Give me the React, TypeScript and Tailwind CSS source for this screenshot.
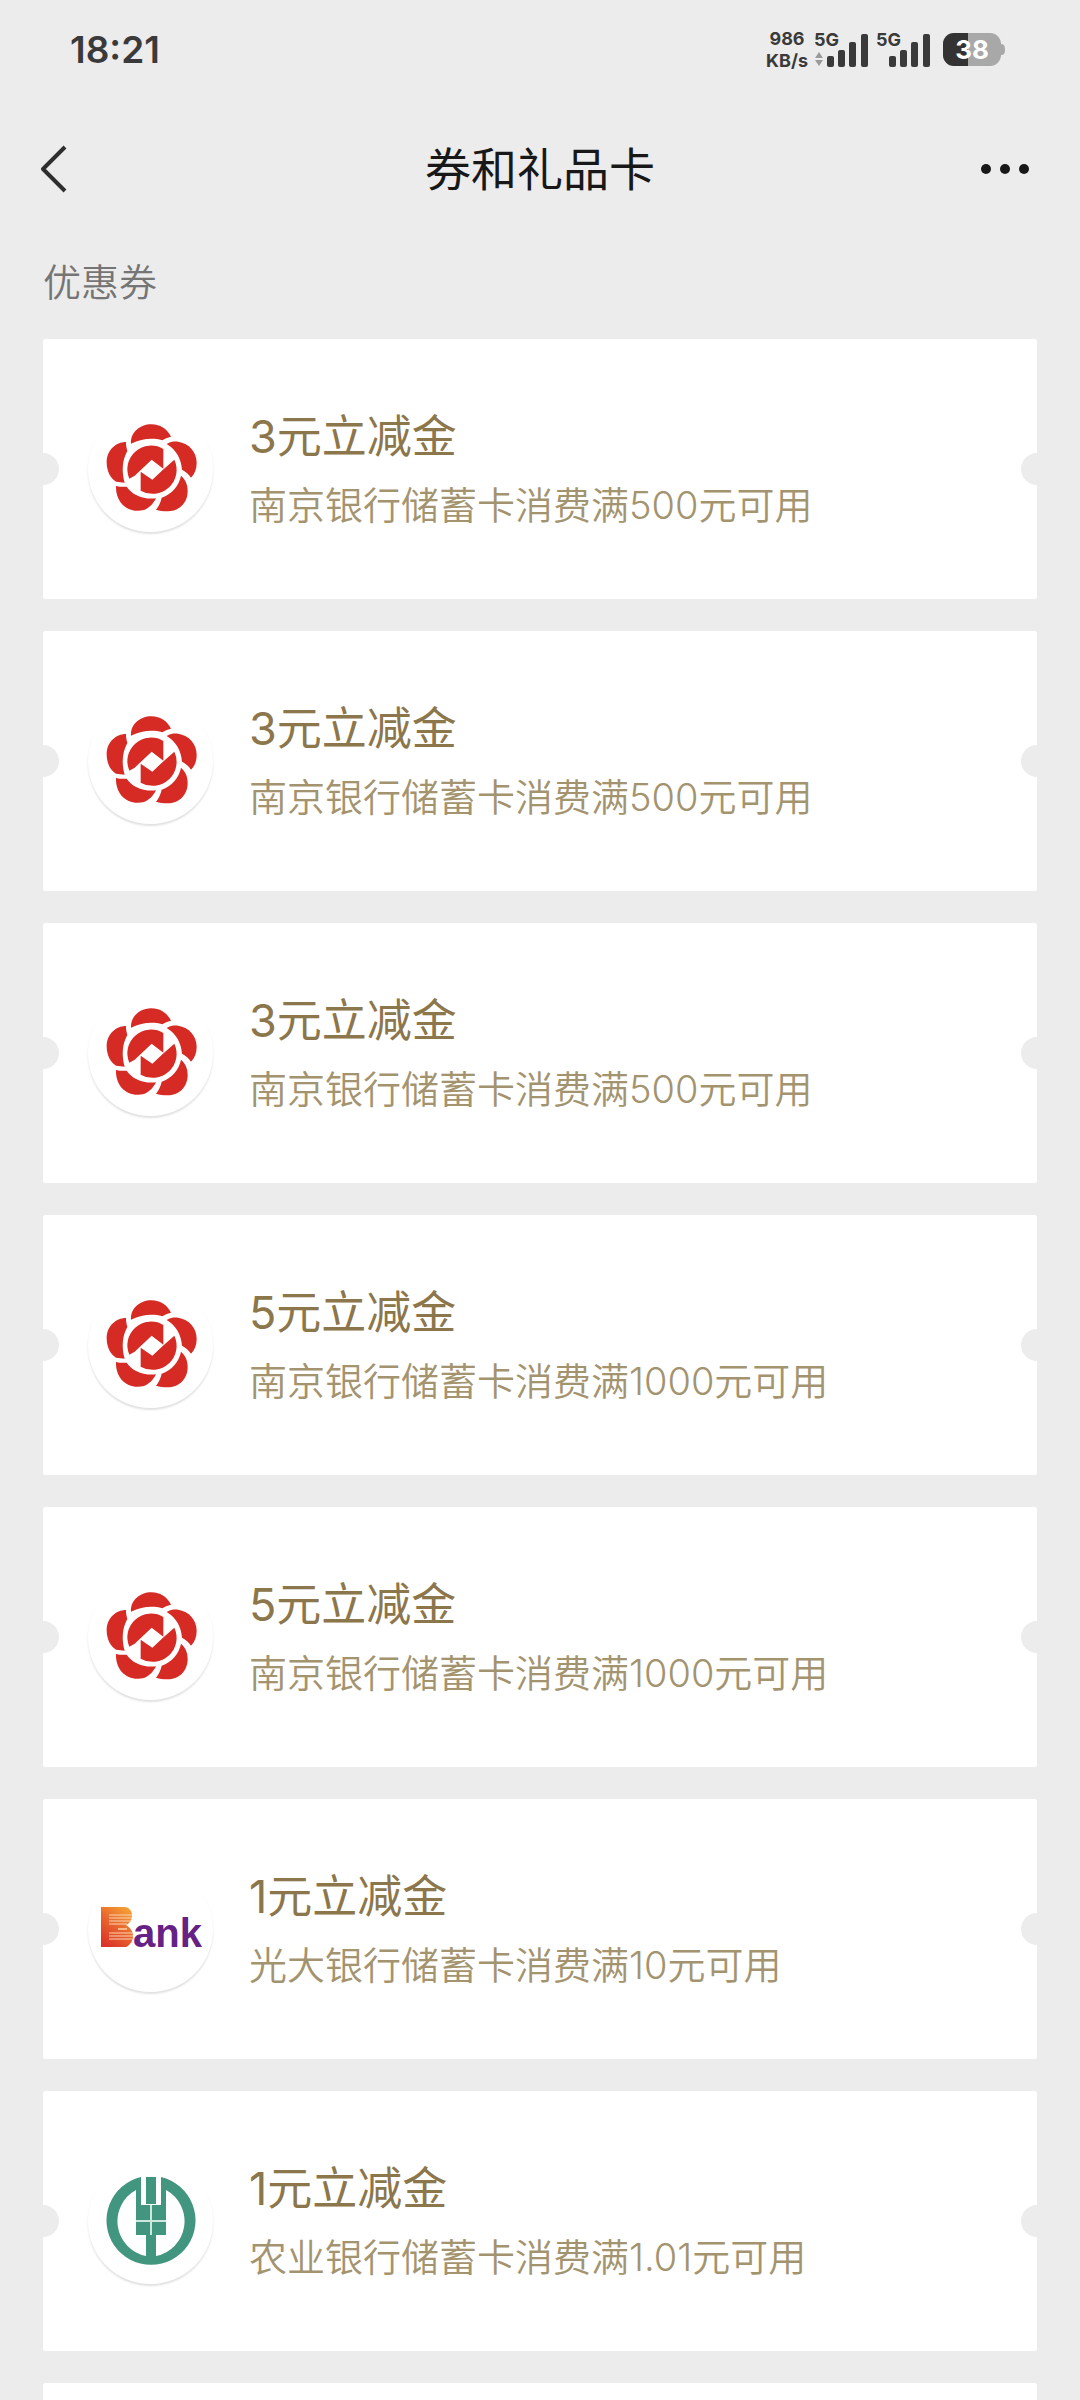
type Bank = 'nanjing' | 'everbright' | 'agricultural';

interface Coupon {
  id: number;
  bank: Bank;
  title: string;
  desc: string;
}

const coupons: Coupon[] = [
  { id: 1, bank: 'nanjing', title: '3元立减金', desc: '南京银行储蓄卡消费满500元可用' },
  { id: 2, bank: 'nanjing', title: '3元立减金', desc: '南京银行储蓄卡消费满500元可用' },
  { id: 3, bank: 'nanjing', title: '3元立减金', desc: '南京银行储蓄卡消费满500元可用' },
  { id: 4, bank: 'nanjing', title: '5元立减金', desc: '南京银行储蓄卡消费满1000元可用' },
  { id: 5, bank: 'nanjing', title: '5元立减金', desc: '南京银行储蓄卡消费满1000元可用' },
  { id: 6, bank: 'everbright', title: '1元立减金', desc: '光大银行储蓄卡消费满10元可用' },
  { id: 7, bank: 'agricultural', title: '1元立减金', desc: '农业银行储蓄卡消费满1.01元可用' },
];

function NanjingLogo() {
  return (
    <svg viewBox="264 232 375 375" className="w-full h-full" fill="#d62a25" aria-hidden="true">
      {/* petals */}
      <path d="M393 342C391 308 420 284 454 284C482 284 503 300 513 321C502 324 494 327 487 332C455 323 425 328 393 342Z" />
      <path d="M378 337C347 337 320 362 320 398C320 426 333 448 348 456L374 459C364 425 367 390 382 364C379 354 378 346 378 337Z" />
      <path d="M500 343C512 336 522 335 534 336C568 341 590 367 590 400C590 418 584 433 573 444C566 433 556 425 546 420C544 388 528 359 500 343Z" />
      <path d="M348 469C360 472 370 472 380 471C396 495 428 510 468 506C459 524 446 536 432 541C385 553 346 520 348 469Z" />
      <path d="M543 438C556 449 563 464 563 484C563 522 535 545 503 545C490 545 478 543 468 540C477 529 482 517 485 504C515 493 537 469 543 438Z" />
      {/* coin in the middle */}
      <path d="M490 358A71 71 0 0 0 388 447L404 438L455 390L490 417Z" />
      <path d="M422 483A72 72 0 0 0 523 390L489 420L457 450L422 426Z" />
    </svg>
  );
}

function EverbrightLogo() {
  return (
    <svg viewBox="0 0 125 125" className="w-full h-full" aria-hidden="true">
      <defs>
        <linearGradient id="everbright" x1="0.8" y1="0" x2="0.2" y2="1">
          <stop offset="0" stopColor="#f6a234" />
          <stop offset="0.5" stopColor="#e8642e" />
          <stop offset="1" stopColor="#dc3328" />
        </linearGradient>
      </defs>
      <path
        d="M13 40H37C42 41 44 44 44 48C44 53 42 56 38 58C43 61 45 65 45 69C45 74 42 78 38 80H13Z"
        fill="url(#everbright)"
      />
      <path
        d="M21 48H44M21 51H44M21 54H43M21 57H39M21 66H44M21 69H45M21 72H44"
        stroke="#fbd3b4"
        strokeWidth="1.2"
      />
      <path d="M30 61H39V63H30Z" fill="#f9b98c" />
      <text
        x="45"
        y="80"
        fill="#662184"
        fontSize="40"
        fontWeight="700"
        className="font-['Liberation_Sans',sans-serif]"
      >
        ank
      </text>
    </svg>
  );
}

function AgriculturalLogo() {
  return (
    <svg viewBox="0 -1 125 125" className="w-full h-full" fill="#42957f" aria-hidden="true">
      <path
        fillRule="evenodd"
        d="M53 17A44.500 44.500 0 1 0 73 17V45H53ZM48 30V75H58V96A35.500 35.500 0 0 1 48 30ZM78 30V75H68V96A35.500 35.500 0 0 0 78 30Z"
      />
      <path d="M58 17H68V44H58Z" />
      <path d="M63 45V75M48 61H78" stroke="#cfe8df" strokeWidth="2" />
    </svg>
  );
}

const logos: Record<Bank, () => React.JSX.Element> = {
  nanjing: NanjingLogo,
  everbright: EverbrightLogo,
  agricultural: AgriculturalLogo,
};

function Signal() {
  return (
    <div className="relative flex justify-end w-[54px] h-[34px]">
      <span className="absolute left-0 top-0 text-[18px] leading-[14px] font-bold">5G</span>
      <svg viewBox="0 0 41 34" className="w-[41px] h-[34px]" fill="currentColor" aria-hidden="true">
        <rect x="0" y="23" width="7" height="11" rx="2" />
        <rect x="11" y="17" width="7" height="17" rx="2" />
        <rect x="22" y="9" width="7" height="25" rx="2" />
        <rect x="34" y="1" width="7" height="33" rx="2" />
      </svg>
    </div>
  );
}

function StatusBar() {
  return (
    <div className="flex items-center justify-between h-[100px] pl-[70px] pr-[75px] text-[#3a3a3a] font-['Inter',sans-serif]">
      <time className="text-[37px] leading-[48px] font-semibold">18:21</time>
      <div className="flex items-center">
        <div className="flex flex-col items-center mr-[6px] text-[18px] leading-[22px] font-bold">
          <span>986</span>
          <span>KB/s</span>
        </div>
        <div className="relative">
          <Signal />
          <svg viewBox="0 0 10 16" className="absolute left-0 bottom-0 w-[10px] h-4" fill="#9a9a9a" aria-hidden="true">
            <path d="M5 1L9 7H1ZM5 15L9 9H1Z" />
          </svg>
        </div>
        <div className="ml-2">
          <Signal />
        </div>
        <div className="relative ml-[13px]">
          <svg viewBox="0 0 62 34" className="w-[62px] h-[34px]" aria-hidden="true">
            <rect x="0" y="0" width="58" height="33" rx="11" fill="#a8a8a8" />
            <path d="M58 11C61 11 62 13 62 17C62 20 61 22 58 22Z" fill="#a8a8a8" />
            <path d="M11 0H25V33H11A11 11 0 0 1 0 22V11A11 11 0 0 1 11 0Z" fill="#333333" />
          </svg>
          <span className="absolute inset-y-0 left-0 w-[58px] text-center text-[26px] leading-[34px] font-bold text-white">
            38
          </span>
        </div>
      </div>
    </div>
  );
}

function Header() {
  return (
    <header className="flex items-center justify-between h-[138px] px-10 text-[#181818]">
      <button type="button" aria-label="返回" className="w-16 h-16 flex items-center">
        <svg viewBox="0 0 28 48" className="w-7 h-12" fill="none" stroke="#2e2e2e" strokeWidth="4" aria-hidden="true">
          <path d="M25 2L3 24L25 46" strokeLinejoin="round" />
        </svg>
      </button>
      <h1 className="text-[46px] leading-[60px] font-normal">券和礼品卡</h1>
      <button type="button" aria-label="更多" className="w-16 h-16 flex items-center justify-end">
        <svg viewBox="0 0 60 12" className="w-[60px] h-3" fill="currentColor" aria-hidden="true">
          <circle cx="6" cy="6" r="5" />
          <circle cx="25" cy="6" r="5" />
          <circle cx="44" cy="6" r="5" />
        </svg>
      </button>
    </header>
  );
}

function CouponCard({ coupon }: { coupon: Coupon }) {
  const Logo = logos[coupon.bank];

  return (
    <li className="relative">
      <button type="button" className="flex items-center gap-9 w-full h-[260px] px-[45px] bg-white rounded-xs text-left">
        <div className="w-[125px] h-[125px] shrink-0 rounded-full shadow-[0_2px_2px_rgba(0,0,0,0.12)]">
          <Logo />
        </div>
        <div className="min-w-0 pt-1">
          <p className="text-[45px] leading-[52px] text-[#8c764b]">{coupon.title}</p>
          <p className="mt-4 text-[38px] leading-[52px] font-[350] text-[#a3946f]">{coupon.desc}</p>
        </div>
      </button>
      {/* ticket notches */}
      <span className="absolute -left-4 top-1/2 w-8 h-8 -translate-y-1/2 rounded-full bg-[#ececec]" />
      <span className="absolute -right-4 top-1/2 w-8 h-8 -translate-y-1/2 rounded-full bg-[#ececec]" />
    </li>
  );
}

export default function App() {
  return (
    <div className="flex flex-col h-screen bg-[#ececec] font-['Inter','Noto_Sans_CJK_SC',sans-serif]">
      <StatusBar />
      <Header />
      <main className="flex-1 min-h-0 overflow-hidden px-[43px]">
        <h2 className="pt-[18px] pb-[31px] text-[38px] leading-[52px] font-[350] text-[#757575]">优惠券</h2>
        <ul className="flex flex-col gap-8">
          {coupons.map((coupon) => (
            <CouponCard key={coupon.id} coupon={coupon} />
          ))}
          <li className="h-[260px] bg-white rounded-xs" />
        </ul>
      </main>
    </div>
  );
}
